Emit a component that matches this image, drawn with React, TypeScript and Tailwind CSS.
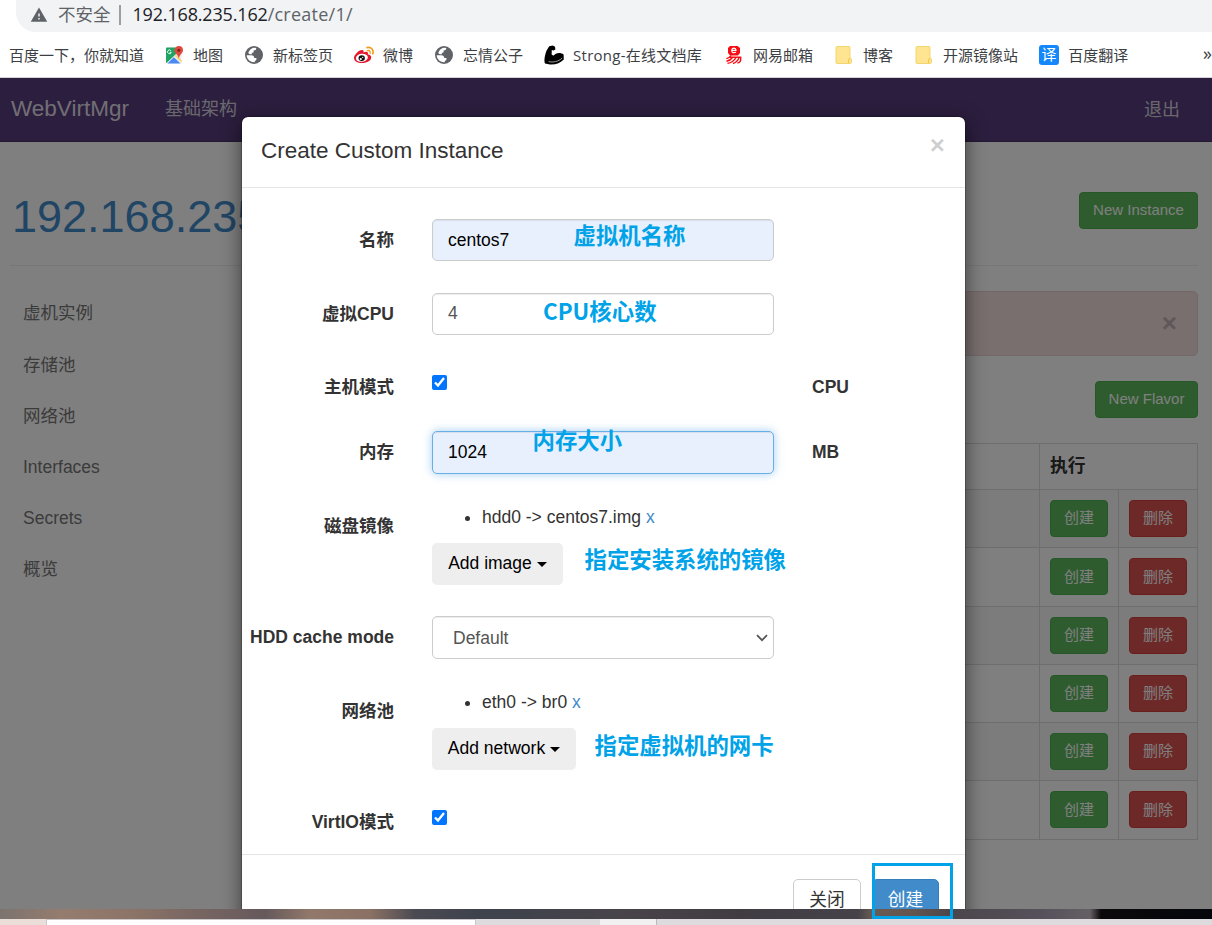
import type { ReactNode } from "react";
import { MdWarning } from "react-icons/md";

const MapsIcon = () => (
  <svg className="w-5 h-5" viewBox="0 0 20 20">
    <rect x="2" y="2.5" width="15.5" height="16" rx="1" fill="#e8eaed" />
    <path d="M2 3.5 Q2 2.5 3 2.5 H13 V8 L2.5 18 Q2 18 2 17 Z" fill="#1fa463" />
    <path d="M3.5 18.5 L9.8 12.2 L16.5 18.5 Z" fill="#4a89f3" />
    <path d="M12 10 L17.8 15.5 V17.5 L11 11 Z" fill="#fbd75b" />
    <path d="M6.9 5.6 A1.9 1.9 0 1 0 7.3 7.3 H5.6" fill="none" stroke="#fff" strokeWidth="0.9" />
    <path d="M14.8 1 A4.3 4.3 0 0 0 10.5 5.3 C10.5 8.4 14.2 9.3 14.8 14 C15.4 9.3 19 8.4 19 5.3 A4.3 4.3 0 0 0 14.8 1 Z" fill="#e0493c" />
    <circle cx="14.8" cy="5.3" r="1.5" fill="#7b231c" />
  </svg>
);

const WeiboIcon = () => (
  <svg className="w-5 h-5" viewBox="0 0 20 20">
    <path d="M8 5 C9.8 5 9.8 6.2 9.5 7.4 C12 6.3 14.7 6.4 13.8 9.3 C16 9.8 17.6 11 17.2 13 C16.6 16.2 12 18 7.8 18 C3.6 18 0 16 0 13 C0 10 4.6 5 8 5 Z" fill="#e6162d" />
    <ellipse cx="7.9" cy="12.8" rx="6" ry="4" fill="#fff" transform="rotate(-8 7.9 12.8)" />
    <ellipse cx="7.7" cy="13.1" rx="3.2" ry="2.9" fill="#111" />
    <circle cx="6.8" cy="14" r="1.1" fill="#fff" />
    <circle cx="8.7" cy="12.4" r="0.6" fill="#fff" />
    <path d="M13 2.6 C17 1.6 20.2 4.6 18.8 8.8" fill="none" stroke="#f59a16" strokeWidth="1.6" strokeLinecap="round" />
    <path d="M13.3 5.6 C15.5 5.1 16.6 6.4 16.1 8.3" fill="none" stroke="#f59a16" strokeWidth="1.3" strokeLinecap="round" />
  </svg>
);

const NeteaseIcon = () => (
  <svg className="w-5 h-5" viewBox="0 0 20 20" fill="none" stroke="#f80c12">
    <path d="M6 1 H13.5 L16 3 V8 L14 10.5 H6 L4 8 V3 Z" fill="#f80c12" stroke="none" />
    <path d="M7.6 5.4 H12 C12 2.4 7.7 2.4 7.7 5.4 C7.7 7.8 10.2 8.2 12 7.1" stroke="#fff" strokeWidth="1.2" />
    <path d="M2.3 13.6 C5 13.2 6.2 12 7 10.5 M5.5 12.2 H16.7 C17 15.2 16.3 18.3 13.4 17.8 M8.4 12.5 C7 14.7 5 15.8 2.5 16.2 M12 12.5 C10.3 15.7 7 18 3.5 18.4 M15 13 C13.7 16 11.7 17.8 9 18.5" strokeWidth="1.4" />
  </svg>
);

const FolderIcon = () => (
  <svg className="w-5 h-5" viewBox="0 0 20 20">
    <path d="M3 1.5 H15 Q16 1.5 16 2.5 V13 L17.5 14 V17 Q17.5 18.5 16 18.5 H3 Q2 18.5 2 17.5 V2.5 Q2 1.5 3 1.5 Z" fill="#ffe591" stroke="#f3d367" strokeWidth="0.9" />
    <path d="M14.5 18.3 V15 Q14.5 13.7 16 13.6" fill="none" stroke="#edc84f" strokeWidth="1" />
  </svg>
);

const GlobeIcon = () => (
  <svg className="w-5 h-5" viewBox="0 0 20 20">
    <circle cx="10" cy="10" r="9" fill="#5f6368" />
    <path d="M2.6 10.2 H7.2 Q10.2 10.4 10.2 13 H12.4 V14.6 Q12.2 15.8 10.8 15.8 V17.3 A7.4 7.4 0 0 1 2.6 10.2 Z" fill="#fff" />
    <path d="M8.6 3 Q10 2.4 12.2 2.9 V3.8 Q12.2 5 10.8 5.2 L9.6 5.6 V7 Q9.6 7.8 8.6 7.8 H7.8 V9.2 H6 Q4.6 9 4.3 7.4 Q5.6 4.2 8.6 3 Z" fill="#fff" />
    <path d="M12.8 7 H16.6 Q17.6 9 17.3 11.2 Q16.8 13.4 15.6 14.9 L14.6 14 V12.2 Q14.6 11 13.4 11 L12.2 10 V8 Z" fill="#5f6368" />
  </svg>
);

const ArmIcon = () => (
  <svg className="w-5 h-5" viewBox="0 0 20 20">
    <path d="M5.2 1.2 L8.8 0.4 L11 1.8 L11.4 4.6 L9.4 5.4 L7.8 5 L7.6 9.6 C9 10.3 9.4 11.2 10.2 10 C12.2 7.4 17 7.2 19.6 9.4 L19.8 14.4 C16.6 17.8 11.6 19.8 6 19.4 L1 18.6 C-0.2 16.6 0.6 10.6 2.6 5.6 Z" fill="#000" />
    <path d="M4.6 16.6 C9 17.6 14.2 16.8 18.2 13" fill="none" stroke="#fff" strokeWidth="0.6" />
  </svg>
);

const TranslateIcon = () => (
  <span className="w-5 h-5 rounded-[3px] bg-[#1487fa] text-white text-[15px] leading-[19px] text-center">译</span>
);

const bookmarks: { name: string; icon?: ReactNode }[] = [
  { name: "百度一下，你就知道" },
  { name: "地图", icon: <MapsIcon /> },
  { name: "新标签页", icon: <GlobeIcon /> },
  { name: "微博", icon: <WeiboIcon /> },
  { name: "忘情公子", icon: <GlobeIcon /> },
  { name: "Strong-在线文档库", icon: <ArmIcon /> },
  { name: "网易邮箱", icon: <NeteaseIcon /> },
  { name: "博客", icon: <FolderIcon /> },
  { name: "开源镜像站", icon: <FolderIcon /> },
  { name: "百度翻译", icon: <TranslateIcon /> },
];

const menu = ["虚机实例", "存储池", "网络池", "Interfaces", "Secrets", "概览"];

const flavors = [1, 2, 3, 4, 5, 6];

const Browser = () => (
  <div className="h-[78px] shrink-0 flex flex-col bg-white border-b border-[#d5d1da] font-['Open_Sans','Noto_Sans_CJK_SC',sans-serif]">
    <div className="h-8 shrink-0 ml-4 pl-[14px] flex items-center rounded-bl-[20px] bg-[#f1f3f4] text-[18px] whitespace-nowrap">
      <MdWarning className="w-[18px] h-[18px] -mt-[2px] text-[#5f6368]" />
      <span className="ml-[10px] -mt-[3px] text-[17.5px] text-[#5f6368]">不安全</span>
      <span className="w-[2px] h-5 ml-[8px] -mt-[2px] bg-[#9a9da1]" />
      <span className="ml-3 -mt-[3px] tracking-[-0.17px] text-[#202124]">192.168.235.162</span>
      <span className="-mt-[3px] tracking-[0.25px] text-[#5f6368]">/create/1/</span>
    </div>
    <div className="h-[45px] pl-[9px] flex items-center gap-5 text-[15px] text-[#3c4043] whitespace-nowrap">
      {bookmarks.map((item) => (
        <div key={item.name} className="h-5 flex items-center gap-[9px]">
          {item.icon}
          <span className={item.name.startsWith("Strong") ? "w-[131px] mt-[2px] tracking-[0.25px]" : "mt-[2px] pr-px first:pr-0"}>
            {item.name}
          </span>
        </div>
      ))}
      <span className="ml-auto -mt-1 text-lg">»</span>
    </div>
  </div>
);

const Dashboard = () => (
  <div className="h-full flex flex-col">
    <nav className="h-16 shrink-0 pl-[11px] pr-8 flex items-center bg-[#563d7c] border-b border-[#463265] text-[#cdbfe3]">
      <span className="w-[154px] -mt-px text-[22.5px] text-[#e2dfe8]">WebVirtMgr</span>
      <span className="text-[18px] text-[#d5d0dd]">基础架构</span>
      <span className="ml-auto mt-px text-[18px] text-[#d5d0dd]">退出</span>
    </nav>
    <div className="mx-[10px] mr-[14px] h-[124px] shrink-0 flex items-start justify-between border-b border-[#eee]">
      <h1 className="mt-[41px] ml-[2px] text-[45px] leading-[68px] text-[#428bca]">192.168.235.162</h1>
      <button className="mt-[50px] w-[119px] h-[37px] rounded-[4px] border border-[#4cae4c] bg-[#5cb85c] text-[15px] text-white">
        New Instance
      </button>
    </div>
    <div className="pl-[10px] pr-[14px] flex">
      <ul className="w-[290px] pt-[22px] pl-[13px] text-[17.5px] text-[#777]">
        {menu.map((name) => (
          <li key={name} className="h-[51.2px] flex items-center">
            {name}
          </li>
        ))}
      </ul>
      <div className="grow pt-[25px] flex flex-col items-end">
        <div className="w-full h-[65px] pr-[20px] flex items-center justify-end rounded-[5px] border border-[#ebccd1] bg-[#f2dede]">
          <span className="text-[26px] font-bold text-[#c1b1b1]">×</span>
        </div>
        <button className="mt-[25px] w-[103px] h-[37px] shrink-0 rounded-[4px] border border-[#4cae4c] bg-[#5cb85c] text-[15px] text-white">
          New Flavor
        </button>
        <div className="w-full mt-[25px] border border-b-0 border-[#ddd] text-[17.7px]">
          <div className="h-[46px] flex border-b border-[#ddd]">
            <span className="grow" />
            <span className="w-[158px] pl-[10px] border-l border-[#ddd] leading-[45px] font-bold text-[#333]">执行</span>
          </div>
          {flavors.map((id) => (
            <div key={id} className="h-[58.3px] flex border-b border-[#ddd] odd:bg-white even:bg-[#f9f9f9]">
              <span className="grow" />
              <span className="w-[79px] pt-[10px] pl-[10px] border-l border-[#ddd]">
                <button className="block w-[58px] h-[37px] rounded-[4px] border border-[#4cae4c] bg-[#5cb85c] text-[15px] text-white">创建</button>
              </span>
              <span className="w-[79px] pt-[10px] pl-[10px] border-l border-[#ddd]">
                <button className="block w-[58px] h-[37px] rounded-[4px] border border-[#d43f3a] bg-[#d9534f] text-[15px] text-white">删除</button>
              </span>
            </div>
          ))}
        </div>
      </div>
    </div>
  </div>
);

const Label = ({ children }: { children: ReactNode }) => (
  <label className="w-[152px] shrink-0 mr-[38px] pt-[9px] leading-[25px] text-right font-bold whitespace-nowrap">{children}</label>
);

const Unit = ({ children }: { children: ReactNode }) => (
  <span className="ml-[38px] pt-[9px] leading-[25px] font-bold">{children}</span>
);

const Caret = () => (
  <span className="inline-block ml-[5px] align-middle border-x-[5px] border-t-[5px] border-x-transparent border-t-black" />
);

const Device = ({ text }: { text: string }) => (
  <div className="h-[38px] flex">
    <span className="w-[5px] h-[5px] mt-[11px] ml-[33px] mr-[12px] rounded-full bg-[#333]" />
    <span className="leading-[25px]">
      {text} <a className="text-[#428bca]">x</a>
    </span>
  </div>
);

const Modal = () => (
  <div className="absolute left-[241px] top-[38px] w-[725px] h-[900px] flex flex-col rounded-[7px] border border-black/20 bg-white bg-clip-padding shadow-[0_6px_19px_rgba(0,0,0,0.5)] text-[17.5px] text-[#333]">
    <div className="h-[71px] shrink-0 pl-[19px] pr-[20px] flex justify-between border-b border-[#e5e5e5]">
      <h4 className="pt-[18px] text-[22.5px] leading-[32px]">Create Custom Instance</h4>
      <span className="pt-[15px] text-[26px] leading-[26px] font-bold text-black/20">×</span>
    </div>
    <div className="h-[666px] shrink-0 pt-[31px]">
      <div className="h-[74px] flex">
        <Label>名称</Label>
        <div className="w-[342px] h-[42px] pl-[15px] rounded-[5px] border border-[#ccc] bg-[#e8f0fe] shadow-[inset_0_1px_1px_rgba(0,0,0,0.075)] leading-[40px] text-black">
          centos7
        </div>
      </div>
      <div className="h-[73px] flex">
        <Label>虚拟CPU</Label>
        <div className="w-[342px] h-[42px] pl-[15px] rounded-[5px] border border-[#ccc] bg-white shadow-[inset_0_1px_1px_rgba(0,0,0,0.075)] leading-[38px] text-[#555]">
          4
        </div>
      </div>
      <div className="h-[65px] flex">
        <Label>主机模式</Label>
        <div className="w-[342px] pt-[9px]">
          <input type="checkbox" defaultChecked className="block w-[15px] h-[15px]" />
        </div>
        <Unit>CPU</Unit>
      </div>
      <div className="h-[74px] flex">
        <Label>内存</Label>
        <div className="w-[342px] h-[43px] pl-[15px] rounded-[5px] border border-[#66afe9] bg-[#e8f0fe] shadow-[inset_0_1px_1px_rgba(0,0,0,0.075),0_0_10px_rgba(102,175,233,0.6)] leading-[40px] text-black">
          1024
        </div>
        <Unit>MB</Unit>
      </div>
      <div className="h-[111px] flex">
        <Label>磁盘镜像</Label>
        <div>
          <Device text="hdd0 -> centos7.img" />
          <button className="block w-[131px] h-[42px] pb-[2px] rounded-[5px] bg-[#eee] text-black">
            Add image
            <Caret />
          </button>
        </div>
      </div>
      <div className="h-[74px] flex">
        <Label>HDD cache mode</Label>
        <div className="w-[342px] h-[43px] pl-[20px] pr-[5px] flex items-center justify-between rounded-[5px] border border-[#ccc] bg-white shadow-[inset_0_1px_1px_rgba(0,0,0,0.075)] text-[#555]">
          <span className="mt-px">Default</span>
          <svg className="w-3 h-3" viewBox="0 0 12 12" fill="none" stroke="#555" strokeWidth="1.7">
            <path d="M1 3.2 L6 8.2 L11 3.2" />
          </svg>
        </div>
      </div>
      <div className="h-[111px] flex">
        <Label>网络池</Label>
        <div>
          <Device text="eth0 -> br0" />
          <button className="block w-[144px] h-[42px] pb-[2px] rounded-[5px] bg-[#eee] text-black">
            Add network
            <Caret />
          </button>
        </div>
      </div>
      <div className="flex">
        <Label>VirtIO模式</Label>
        <div className="pt-[9px]">
          <input type="checkbox" defaultChecked className="block w-[15px] h-[15px]" />
        </div>
      </div>
    </div>
    <div className="pt-[24px] pr-[26px] flex justify-end gap-[11px] border-t border-[#e5e5e5] text-[17.7px]">
      <button className="w-[68px] h-[42px] rounded-[5px] border border-[#ccc] bg-white">关闭</button>
      <button className="w-[67px] h-[42px] rounded-[5px] border border-[#357ebd] bg-[#428bca] text-white">创建</button>
    </div>
  </div>
);

// handwritten notes over the form
const Notes = () => (
  <div className="text-[22.4px] leading-8 font-bold text-[#00a2e8] whitespace-nowrap font-['Noto_Sans_CJK_SC',sans-serif]">
    <span className="absolute left-[573.5px] top-[218px]">虚拟机名称</span>
    <span className="absolute left-[543px] top-[294px]">CPU核心数</span>
    <span className="absolute left-[532.5px] top-[423px]">内存大小</span>
    <span className="absolute left-[584.5px] top-[542px]">指定安装系统的镜像</span>
    <span className="absolute left-[594.5px] top-[728px]">指定虚拟机的网卡</span>
    <span className="absolute left-[872px] top-[863px] w-[81px] h-[56px] border-3 border-[#00a2e8]" />
  </div>
);

const Desktop = () => (
  <div className="h-4 shrink-0 flex flex-col">
    <div className="h-[10px] bg-[linear-gradient(90deg,#7c7370_0px,#947c6e_60px,#8d7468_130px,#776561_200px,#66595c_265px,#91786a_310px,#8b7165_370px,#4b4a52_415px,#3d424c_480px,#48444a_620px,#403c42_740px,#45424a_858px,#685b54_872px,#63564f_910px,#4b464b_950px,#55505a_1040px,#655f65_1090px,#0b090a_1101px,#04060c_1212px)]" />
    <div className="h-[6px] flex bg-[#dddbde]">
      <span className="w-[46px] bg-[#ebddd7]" />
      <span className="w-[430px] bg-white border-t border-x border-[#cac8cb]" />
      <span className="w-[124px]" />
      <span className="w-[57px] bg-[#f1f1f1] border-r border-[#bbb]" />
    </div>
  </div>
);

const App = () => {
  return (
    <div className="relative w-[1212px] h-[925px] overflow-hidden flex flex-col bg-white font-['Liberation_Sans','Noto_Sans_CJK_SC',sans-serif]">
      <Browser />
      <div className="relative h-[831px] shrink-0 overflow-hidden">
        <Dashboard />
        <div className="absolute inset-0 bg-black/50" />
        <Modal />
      </div>
      <Desktop />
      <Notes />
    </div>
  );
};

export default App;
